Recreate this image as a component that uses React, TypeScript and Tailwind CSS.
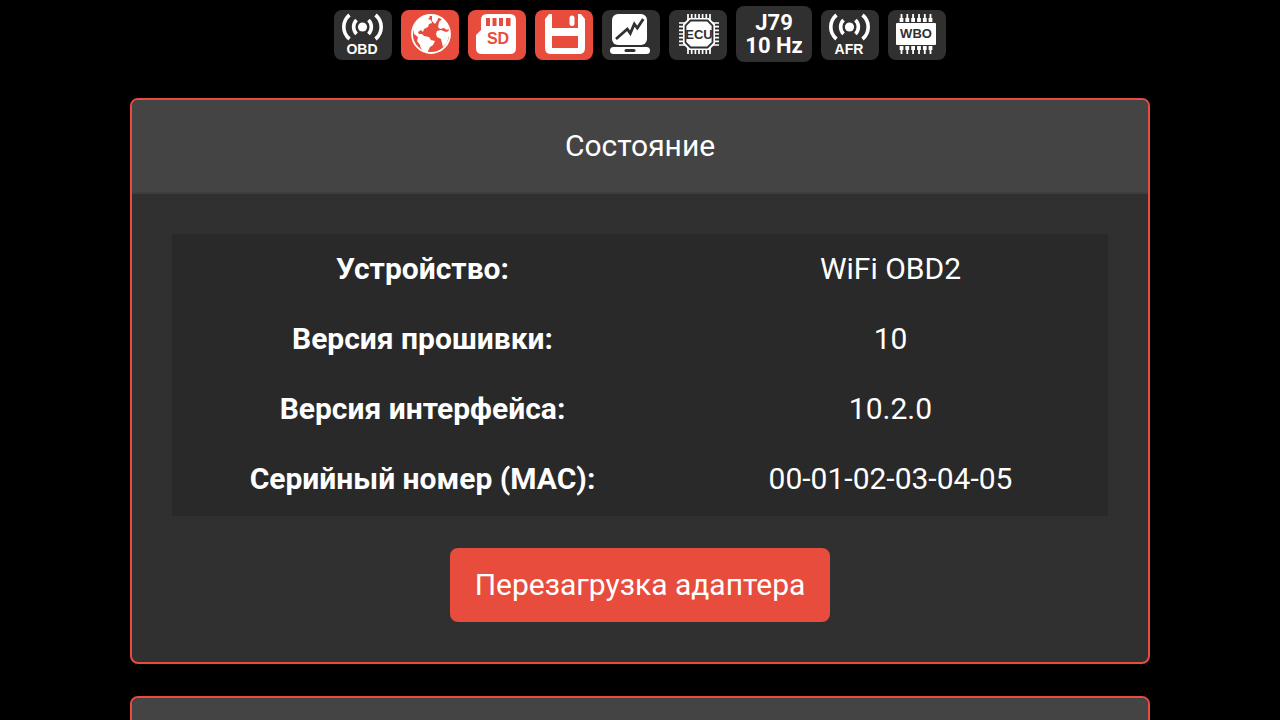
import type { ReactNode } from 'react';

const WHITE = '#ffffff';
const RED = '#e74c3c';
const DARK = '#303030';

function Tile({ label, active = false, children }: { label: string; active?: boolean; children: ReactNode }) {
  return (
    <button
      type="button"
      aria-label={label}
      className={`h-[50px] w-[58px] rounded-lg ${active ? 'bg-[#e74c3c]' : 'bg-[#303030]'}`}
    >
      <svg viewBox="0 0 58 50" className="h-[50px] w-[58px]" aria-hidden="true">
        {children}
      </svg>
    </button>
  );
}

function Signal({ text }: { text: string }) {
  return (
    <>
      <circle cx="28.5" cy="17" r="4.6" fill={WHITE} />
      <g fill="none" stroke={WHITE} strokeWidth="3.6">
        <path d="M22.500 10a10 10 0 0 0 0 14" />
        <path d="M34.500 10a10 10 0 0 1 0 14" />
        <path d="M15.500 5a15.500 15.500 0 0 0 0 24" />
        <path d="M41.500 5a15.500 15.500 0 0 1 0 24" />
      </g>
      <text x="28" y="44" textAnchor="middle" fill={WHITE} className="font-['Liberation_Sans'] text-[14px] font-bold">
        {text}
      </text>
    </>
  );
}

function Globe() {
  return (
    <>
      <circle cx="30" cy="24" r="19" fill="none" stroke={WHITE} strokeWidth="1.8" />
      <g fill={WHITE}>
        <path d="M12 18C14 10 20 5 27 4.500L29 7L27 9L30 10L31 13L28 14L27 17L23 19L22 22L20 20L17 22L18 24L21 24L23 26L28 27L30 30L34 31L32 35L29 37L27 41L26 43C22 41 19 38 19 35L16 31L17 27L13 24Z" />
        <path d="M31 5L38 7L36 11L34 14L31 11Z" />
        <path d="M38 12L42 8L46 14L48 18L46 20L43 18L39 19L37 17Z" />
        <path d="M36 21L40 20L45 22L48 21L48 26L46 33L42 37L41 33L40 29L36 27L35 24Z" />
      </g>
    </>
  );
}

function SdCard() {
  return (
    <>
      <path d="M19 4h23q6 0 6 6v28q0 6-6 6H14q-6 0-6-6V25l5-5V10q0-6 6-6Z" fill={WHITE} />
      <path d="M18 8h4v8h-4zM24.500 8h4v8h-4zM31 8h4v8h-4zM38 8h4.500v8H38z" fill={RED} />
      <text x="30" y="34" textAnchor="middle" fill={RED} className="font-['Liberation_Sans'] text-[16px] font-bold">
        SD
      </text>
    </>
  );
}

function Floppy() {
  return (
    <>
      <path d="M14 4h32l4 5v29q0 6-6 6H16q-6 0-6-6V9Z" fill={WHITE} />
      <path d="M17 4h26v14H17zM17 26h26v12H17z" fill={RED} />
      <rect x="34.5" y="5.5" width="5" height="10.500" rx="2.5" fill={WHITE} />
    </>
  );
}

function Laptop() {
  return (
    <>
      <rect x="10" y="4" width="35" height="31" rx="6" fill={WHITE} />
      <rect x="8" y="37" width="40" height="7" rx="3.5" fill={WHITE} />
      <rect x="22.5" y="39" width="11" height="3" rx="1.5" fill={DARK} />
      <path d="M14 29l11.300-10 3 4.300 4-9.300 3 4 6-9" fill="none" stroke={DARK} strokeWidth="2.8" />
    </>
  );
}

function Chip() {
  return (
    <>
      <g stroke={WHITE} strokeWidth="1.7">
        <path d="M19 4v6M22.700 4v6M26.400 4v6M30 4v6M33.600 4v6M37.300 4v6M41 4v6M19 38v6M22.700 38v6M26.400 38v6M30 38v6M33.600 38v6M37.300 38v6M41 38v6" />
        <path d="M10 13h6M10 16.700h6M10 20.400h6M10 24h6M10 27.600h6M10 31.300h6M10 35h6M44 13h6M44 16.700h6M44 20.400h6M44 24h6M44 27.600h6M44 31.300h6M44 35h6" />
      </g>
      <path d="M20 8h20l6 6v20l-6 6H20l-6-6V14Z" fill={WHITE} />
      <path d="M21.500 10.500h17l5 5v17l-5 5h-17l-5-5v-17Z" fill={WHITE} stroke={DARK} strokeWidth="1.8" />
      <text x="30" y="29" textAnchor="middle" fill={DARK} className="font-['Liberation_Sans'] text-[13px] font-bold">
        ECU
      </text>
    </>
  );
}

function Wideband() {
  return (
    <>
      <path
        d="M13.500 4v5M19.300 4v5M25.100 4v5M31 4v5M36.800 4v5M42.500 4v5M13.500 39v5M19.300 39v5M25.100 39v5M31 39v5M36.800 39v5M42.500 39v5"
        stroke={WHITE}
        strokeWidth="1.8"
      />
      <path
        d="M13.500 8v4M19.300 8v4M25.100 8v4M31 8v4M36.800 8v4M42.500 8v4M13.500 36v4M19.300 36v4M25.100 36v4M31 36v4M36.800 36v4M42.500 36v4"
        stroke={WHITE}
        strokeWidth="3.8"
      />
      <rect x="8" y="13" width="40" height="22" rx="1" fill={WHITE} />
      <text x="28" y="28" textAnchor="middle" fill={DARK} className="font-['Liberation_Sans'] text-[13px] font-bold">
        WBO
      </text>
    </>
  );
}

function Card({ title, children }: { title?: string; children?: ReactNode }) {
  return (
    <section className="w-full max-w-[1020px] shrink-0 overflow-hidden rounded-lg border-2 border-[#e74c3c] bg-[#303030]">
      <header className="min-h-[94px] border-b-2 border-[#3d3d3d] bg-[#444444] px-10 py-6 text-center">
        {title && <h2>{title}</h2>}
      </header>
      <div className="p-10">{children}</div>
    </section>
  );
}

const rows = [
  { name: 'Устройство:', value: 'WiFi OBD2' },
  { name: 'Версия прошивки:', value: '10' },
  { name: 'Версия интерфейса:', value: '10.2.0' },
  { name: 'Серийный номер (MAC):', value: '00-01-02-03-04-05' },
];

export default function App() {
  return (
    <div className="h-screen overflow-hidden bg-black font-[Roboto,sans-serif] text-[30px] leading-[44px] text-white">
      <nav className="flex items-end justify-center gap-[9px] pt-1.5">
        <Tile label="OBD">
          <Signal text="OBD" />
        </Tile>
        <Tile label="Интернет" active>
          <Globe />
        </Tile>
        <Tile label="SD" active>
          <SdCard />
        </Tile>
        <Tile label="Сохранить" active>
          <Floppy />
        </Tile>
        <Tile label="График">
          <Laptop />
        </Tile>
        <Tile label="ECU">
          <Chip />
        </Tile>
        <button
          type="button"
          className="mb-[-2px] flex h-14 w-[76px] flex-col items-center justify-center rounded-lg bg-[#303030] text-[22px] leading-[23px] font-bold"
        >
          <span>J79</span>
          <span>10 Hz</span>
        </button>
        <Tile label="AFR">
          <Signal text="AFR" />
        </Tile>
        <Tile label="WBO">
          <Wideband />
        </Tile>
      </nav>

      <main className="flex flex-col items-center gap-8 px-4 pt-[38px]">
        <Card title="Состояние">
          <div className="bg-[#292929] pb-0.5">
            <table className="w-full table-fixed text-center">
              <colgroup>
                <col className="w-[501px]" />
                <col />
              </colgroup>
              <tbody>
                {rows.map((row) => (
                  <tr key={row.name} className="h-[70px]">
                    <th scope="row" className="font-bold">
                      {row.name}
                    </th>
                    <td>{row.value}</td>
                  </tr>
                ))}
              </tbody>
            </table>
          </div>
          <div className="mt-8 flex justify-center">
            <button type="button" className="h-[74px] w-[380px] rounded-lg bg-[#e74c3c]">
              Перезагрузка адаптера
            </button>
          </div>
        </Card>
        <Card />
      </main>
    </div>
  );
}
